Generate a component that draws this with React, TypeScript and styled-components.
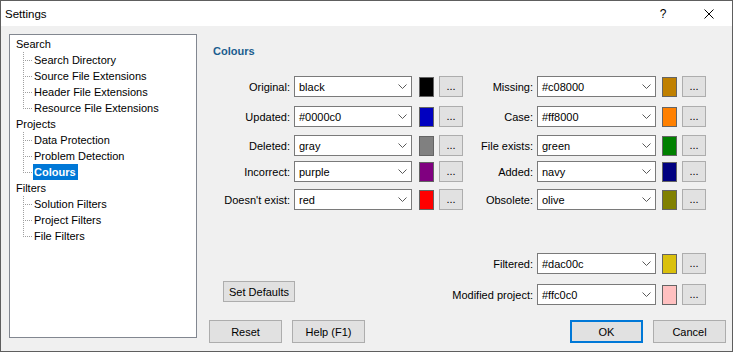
import React from "react";
import styled, { createGlobalStyle } from "styled-components";

const GlobalStyle = createGlobalStyle`
    body {
        margin: 0;
        font-family: "Liberation Sans", Arial, sans-serif;
        font-size: 11px;
        color: #000;
        background: #fff;
    }
`

const Window = styled.div`
    width: 733px;
    height: 352px;
    box-sizing: border-box;
    border: 1px solid #5e5e5e;
    display: flex;
    flex-direction: column;
    background: #f0f0f0;
`

const TitleBar = styled.div`
    height: 25px;
    flex: none;
    display: flex;
    align-items: center;
    background: #ffffff;
    padding-left: 4px;
`

const Title = styled.div`
    flex: 1;
    font-size: 11.5px;
`

const CaptionButton = styled.div`
    width: 46px;
    height: 25px;
    display: flex;
    align-items: center;
    justify-content: center;
    font-size: 12px;
`

const Body = styled.div`
    flex: 1;
    display: flex;
    padding: 8px 6px 8px 8px;
`

const TreePanel = styled.div`
    width: 188px;
    height: 304px;
    box-sizing: border-box;
    border: 1px solid #828790;
    background: #ffffff;
    padding-top: 1px;
    flex: none;
`

const TreeRoot = styled.div`
    height: 16px;
    line-height: 16px;
    padding-left: 6px;
`

const TreeChild = styled.div`
    height: 16px;
    display: flex;
    padding-left: 13px;
`

const Connector = styled.span<{ $last?: boolean }>`
    width: 10px;
    height: 16px;
    flex: none;
    background:
        repeating-linear-gradient(to bottom, #a0a0a0 0 1px, transparent 1px 2px) 0 0 / 1px ${p => (p.$last ? "9px" : "16px")} no-repeat,
        repeating-linear-gradient(to right, #a0a0a0 0 1px, transparent 1px 2px) 0 8px / 10px 1px no-repeat;
`

const TreeLabel = styled.span<{ $selected?: boolean }>`
    line-height: 16px;
    padding: 0 2px 0 1px;
    background: ${p => (p.$selected ? "#0078d7" : "transparent")};
    color: ${p => (p.$selected ? "#ffffff" : "#000000")};
    font-weight: ${p => (p.$selected ? "bold" : "normal")};
`

const Content = styled.div`
    flex: 1;
    margin-left: 12px;
    display: flex;
    flex-direction: column;
`

const Heading = styled.div`
    margin: 9px 0 0 4px;
    line-height: 16px;
    font-weight: bold;
    color: #1a5d8e;
`

const Row = styled.div<{ $top: number }>`
    display: flex;
    align-items: center;
    height: 21px;
    margin-top: ${p => p.$top}px;
`

const Field = styled.div`
    display: flex;
    align-items: center;
`

// long labels run out to the left, as in the dialog
const Label = styled.label<{ $width: number }>`
    width: ${p => p.$width}px;
    flex: none;
    box-sizing: border-box;
    padding-right: 4px;
    display: flex;
    justify-content: flex-end;
    white-space: nowrap;
`

const Combo = styled.div<{ $width: number }>`
    width: ${p => p.$width}px;
    height: 21px;
    box-sizing: border-box;
    border: 1px solid #7a7a7a;
    background: #ffffff;
    display: flex;
    align-items: center;
    padding: 0 4px 0 4px;
`

const ComboText = styled.span`
    flex: 1;
`

const Swatch = styled.div<{ $gap: number; $colour: string }>`
    margin-left: ${p => p.$gap}px;
    width: 15px;
    height: 20px;
    box-sizing: border-box;
    border: 1px solid #646464;
    background: ${p => p.$colour};
`

const Button = styled.button<{ $width?: number; $height?: number; $default?: boolean }>`
    width: ${p => p.$width ?? 73}px;
    height: ${p => p.$height ?? 23}px;
    box-sizing: border-box;
    margin: 0;
    padding: 0;
    border: ${p => (p.$default ? "2px solid #0078d7" : "1px solid #adadad")};
    background: #e1e1e1;
    font-family: "Liberation Sans", Arial, sans-serif;
    font-size: 11px;
    color: #000;
`

const MoreButton = styled(Button)`
    margin-left: 5px;
    line-height: 19px;
`

const Spacer = styled.div<{ $width: number }>`
    width: ${p => p.$width}px;
    flex: none;
    display: flex;
    align-items: center;
`

const DefaultsButton = styled(Button)`
    margin: 0 0 6px 14px;
`

const ButtonBar = styled.div`
    margin-top: auto;
    display: flex;
    align-items: center;
    gap: 10px;
`

const Grow = styled.div`
    flex: 1;
`

const Chevron = () => (
    <svg width="9" height="5" viewBox="0 0 9 5">
        <path d="M0.5 0.5 L4.5 4.5 L8.5 0.5" fill="none" stroke="#5a5a5a" strokeWidth="1" />
    </svg>
)

const CloseIcon = () => (
    <svg width="10" height="10" viewBox="0 0 10 10">
        <path d="M0.5 0.5 L9.5 9.5 M9.5 0.5 L0.5 9.5" stroke="#000" strokeWidth="1" />
    </svg>
)

type Colour = { label: string; value: string; colour: string };

const leftColours: Colour[] = [
    { label: "Original:", value: "black", colour: "#000000" },
    { label: "Updated:", value: "#0000c0", colour: "#0000c0" },
    { label: "Deleted:", value: "gray", colour: "#808080" },
    { label: "Incorrect:", value: "purple", colour: "#800080" },
    { label: "Doesn't exist:", value: "red", colour: "#ff0000" },
]

const rightColours: Colour[] = [
    { label: "Missing:", value: "#c08000", colour: "#c08000" },
    { label: "Case:", value: "#ff8000", colour: "#ff8000" },
    { label: "File exists:", value: "green", colour: "#008000" },
    { label: "Added:", value: "navy", colour: "#000080" },
    { label: "Obsolete:", value: "olive", colour: "#808000" },
]

const rowGaps = [17, 9, 8, 5, 7];

const tree = [
    { name: "Search", children: ["Search Directory", "Source File Extensions", "Header File Extensions", "Resource File Extensions"] },
    { name: "Projects", children: ["Data Protection", "Problem Detection", "Colours"] },
    { name: "Filters", children: ["Solution Filters", "Project Filters", "File Filters"] },
]

const ColourField = ({ c, side }: { c: Colour; side: "left" | "right" }) => (
    <Field>
        <Label $width={side === "left" ? 85 : 74}>{c.label}</Label>
        <Combo $width={side === "left" ? 118 : 119}>
            <ComboText>{c.value}</ComboText>
            <Chevron />
        </Combo>
        <Swatch $gap={side === "left" ? 7 : 6} $colour={c.colour} />
        <MoreButton $width={24} $height={21}>...</MoreButton>
    </Field>
)

const App: React.FC = () => {
    return (
        <>
            <GlobalStyle />
            <Window>
                <TitleBar>
                    <Title>Settings</Title>
                    <CaptionButton>?</CaptionButton>
                    <CaptionButton><CloseIcon /></CaptionButton>
                </TitleBar>
                <Body>
                    <TreePanel>
                        {tree.map(group => (
                            <React.Fragment key={group.name}>
                                <TreeRoot>{group.name}</TreeRoot>
                                {group.children.map((child, i) => (
                                    <TreeChild key={child}>
                                        <Connector $last={i === group.children.length - 1} />
                                        <TreeLabel $selected={child === "Colours"}>{child}</TreeLabel>
                                    </TreeChild>
                                ))}
                            </React.Fragment>
                        ))}
                    </TreePanel>
                    <Content>
                        <Heading>Colours</Heading>
                        {leftColours.map((c, i) => (
                            <Row key={c.label} $top={rowGaps[i]}>
                                <ColourField c={c} side="left" />
                                <ColourField c={rightColours[i]} side="right" />
                            </Row>
                        ))}
                        <Row $top={43}>
                            <Spacer $width={254} />
                            <ColourField c={{ label: "Filtered:", value: "#dac00c", colour: "#dac00c" }} side="right" />
                        </Row>
                        <Row $top={10}>
                            <Spacer $width={254}>
                                <DefaultsButton $width={72} $height={21}>Set Defaults</DefaultsButton>
                            </Spacer>
                            <ColourField c={{ label: "Modified project:", value: "#ffc0c0", colour: "#ffc0c0" }} side="right" />
                        </Row>
                        <ButtonBar>
                            <Button>Reset</Button>
                            <Button>Help (F1)</Button>
                            <Grow />
                            <Button $default>OK</Button>
                            <Button>Cancel</Button>
                        </ButtonBar>
                    </Content>
                </Body>
            </Window>
        </>
    )
}

export default App;
